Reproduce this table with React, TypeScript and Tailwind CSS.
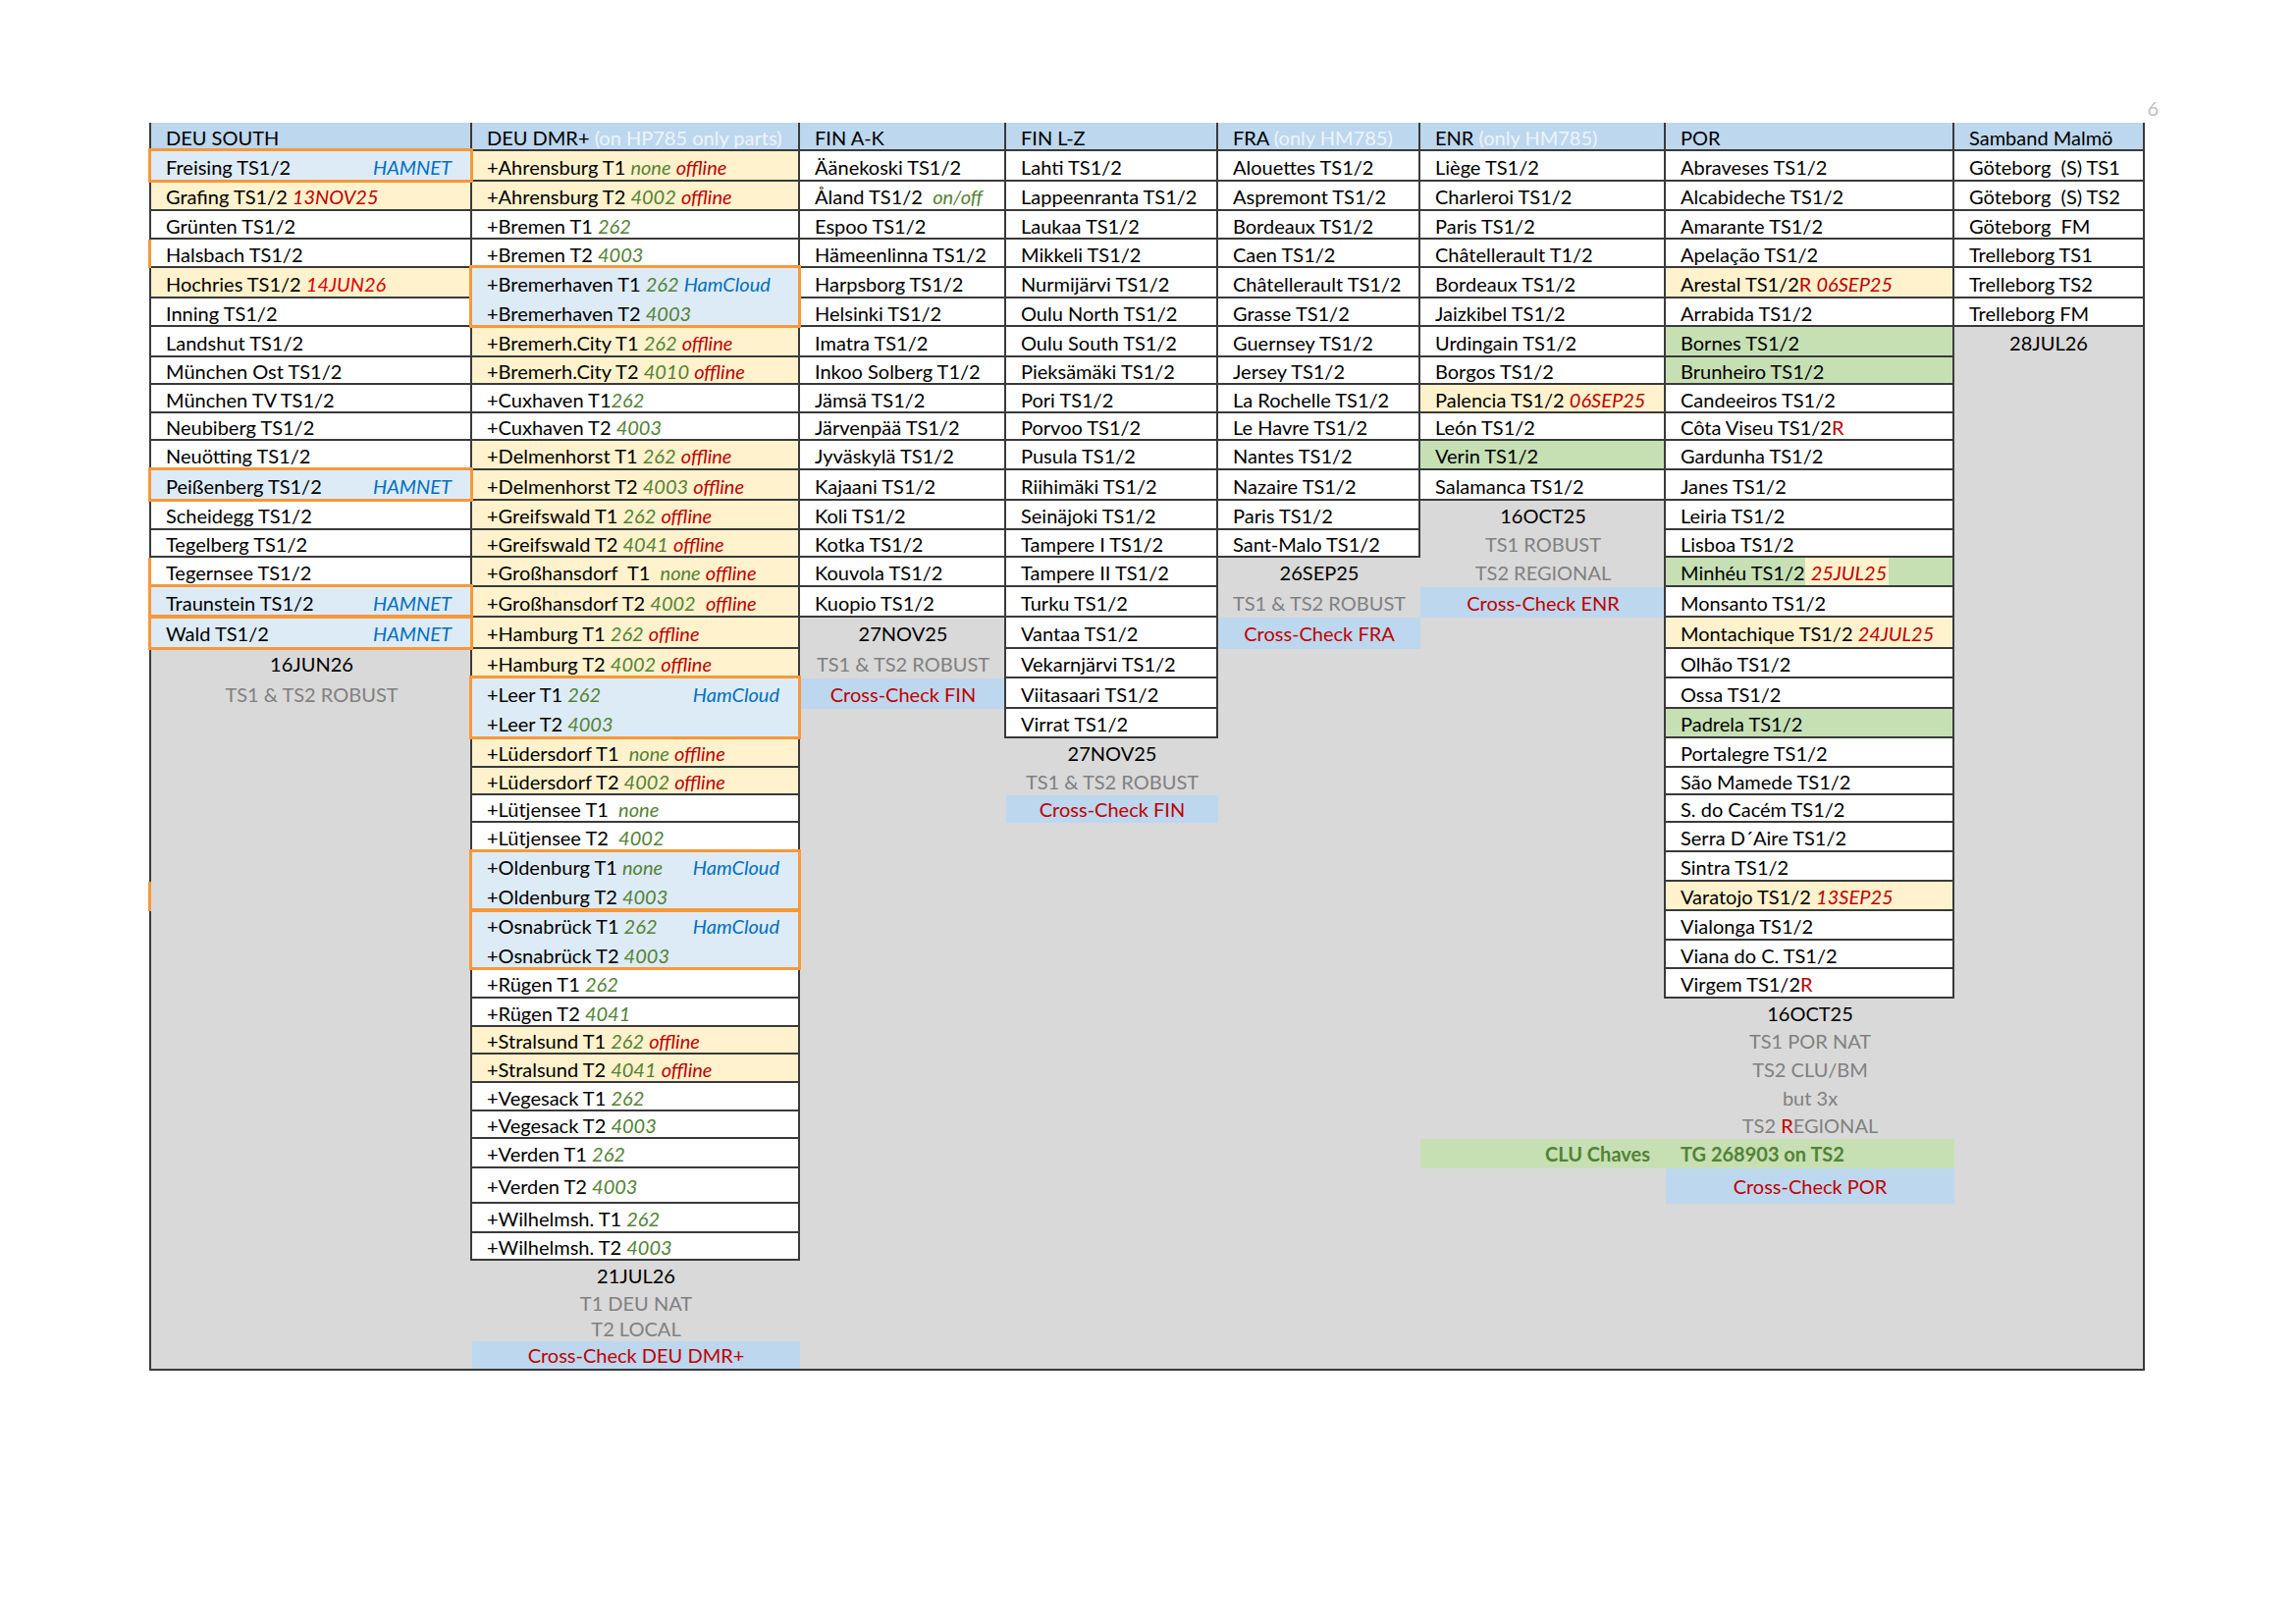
import React from "react";

type N = React.ReactNode;
type Line = { l?: N; r?: N; c?: N; cr?: N };
type Cell = { box: boolean; bg: string; lines: Line[]; orange?: boolean; oleft?: boolean };

const RH = [
  "h-[29px]", "h-[31px]", "h-[30px]", "h-[29px]", "h-[29px]", "h-[31px]", "h-[29px]", "h-[31px]", "h-[28px]", "h-[29px]",
  "h-[28px]", "h-[30px]", "h-[31px]", "h-[30px]", "h-[28px]", "h-[30px]", "h-[31px]", "h-[32px]", "h-[30px]", "h-[31px]",
  "h-[30px]", "h-[30px]", "h-[28px]", "h-[28px]", "h-[30px]", "h-[30px]", "h-[30px]", "h-[30px]", "h-[29px]", "h-[30px]",
  "h-[29px]", "h-[28px]", "h-[29px]", "h-[29px]", "h-[28px]", "h-[30px]", "h-[36px]", "h-[30px]", "h-[28px]", "h-[29px]",
  "h-[27px]", "h-[26px]", "h-[28px]",
];

const CW = ["w-[327px]", "w-[334px]", "w-[210px]", "w-[216px]", "w-[206px]", "w-[250px]", "w-[294px]", "w-[192px]"];

const W = "bg-white";
const Y = "bg-[#fff2cc]";
const LB = "bg-[#ddebf7]";
const GN = "bg-[#c6e0b4]";
const BL = "bg-[#bdd7ee]";
const GY = "bg-[#d9d9d9]";

const G = ({ children }: { children: N }) => <span className="italic text-[#548235]">{children}</span>;
const R = ({ children }: { children: N }) => <span className="italic text-[#c00000]">{children}</span>;
const RU = ({ children }: { children: N }) => <span className="text-[#c00000]">{children}</span>;
const B = ({ children }: { children: N }) => <span className="italic text-[#0070c0]">{children}</span>;
const GT = ({ children }: { children: N }) => <span className="text-[#808080]">{children}</span>;
const LT = ({ children }: { children: N }) => <span className="text-[#eef4fb]">{children}</span>;
const CG = ({ children }: { children: N }) => <span className="font-bold text-[#548235]">{children}</span>;

const box = (l: N, bg: string = W, o: { r?: N; orange?: boolean; oleft?: boolean } = {}): Cell => ({
  box: true,
  bg,
  lines: [{ l, r: o.r }],
  orange: o.orange,
  oleft: o.oleft,
});
const box2 = (a: Line, b: Line, bg: string): Cell => ({ box: true, bg, lines: [a, b], orange: true });
const fill = (line: Line = {}, bg: string = GY, oleft?: boolean): Cell => ({ box: false, bg, lines: [line], oleft });
const pad = (n: number): Cell[] => Array.from({ length: Math.max(0, n) }, () => fill());
const cc = (t: string): Cell => fill({ c: <RU>{t}</RU> }, BL);

const COLS: { head: N; cells: Cell[] }[] = [
  {
    head: "DEU SOUTH",
    cells: [
      box("Freising TS1/2", LB, { r: <B>HAMNET</B>, orange: true }),
      box(<>Grafing TS1/2 <R>13NOV25</R></>, Y),
      box("Grünten TS1/2"),
      box("Halsbach TS1/2", W, { oleft: true }),
      box(<>Hochries TS1/2 <span className="italic text-[#e00000]">14JUN26</span></>, Y),
      box("Inning TS1/2"),
      box("Landshut TS1/2"),
      box("München Ost TS1/2"),
      box("München TV TS1/2"),
      box("Neubiberg TS1/2"),
      box("Neuötting TS1/2"),
      box("Peißenberg TS1/2", LB, { r: <B>HAMNET</B>, orange: true }),
      box("Scheidegg TS1/2"),
      box("Tegelberg TS1/2"),
      box("Tegernsee TS1/2", W, { oleft: true }),
      box("Traunstein TS1/2", LB, { r: <B>HAMNET</B>, orange: true }),
      box("Wald TS1/2", LB, { r: <B>HAMNET</B>, orange: true }),
      fill({ c: "16JUN26" }),
      fill({ c: <GT>TS1 &amp; TS2 ROBUST</GT> }),
      ...pad(6),
      fill({}, GY, true),
    ],
  },
  {
    head: (
      <>
        DEU DMR+ <LT>(on HP785 only parts)</LT>
      </>
    ),
    cells: [
      box(<>+Ahrensburg T1 <G>none</G> <R>offline</R></>, Y),
      box(<>+Ahrensburg T2 <G>4002</G> <R>offline</R></>, Y),
      box(<>+Bremen T1 <G>262</G></>),
      box(<>+Bremen T2 <G>4003</G></>),
      box2(
        { l: <>+Bremerhaven T1 <G>262</G> <B>HamCloud</B></> },
        { l: <>+Bremerhaven T2 <G>4003</G></> },
        LB
      ),
      box(<>+Bremerh.City T1 <G>262</G> <R>offline</R></>, Y),
      box(<>+Bremerh.City T2 <G>4010</G> <R>offline</R></>, Y),
      box(<>+Cuxhaven T1<G>262</G></>),
      box(<>+Cuxhaven T2 <G>4003</G></>),
      box(<>+Delmenhorst T1 <G>262</G> <R>offline</R></>, Y),
      box(<>+Delmenhorst T2 <G>4003</G> <R>offline</R></>, Y),
      box(<>+Greifswald T1 <G>262</G> <R>offline</R></>, Y),
      box(<>+Greifswald T2 <G>4041</G> <R>offline</R></>, Y),
      box(<>{"+Großhansdorf  T1  "}<G>none</G> <R>offline</R></>, Y),
      box(<>+Großhansdorf T2 <G>4002</G>{"  "}<R>offline</R></>, Y),
      box(<>+Hamburg T1 <G>262</G> <R>offline</R></>, Y),
      box(<>+Hamburg T2 <G>4002</G> <R>offline</R></>, Y),
      box2({ l: <>+Leer T1 <G>262</G></>, r: <B>HamCloud</B> }, { l: <>+Leer T2 <G>4003</G></> }, LB),
      box(<>{"+Lüdersdorf T1  "}<G>none</G> <R>offline</R></>, Y),
      box(<>+Lüdersdorf T2 <G>4002</G> <R>offline</R></>, Y),
      box(<>{"+Lütjensee T1  "}<G>none</G></>),
      box(<>{"+Lütjensee T2  "}<G>4002</G></>),
      box2({ l: <>+Oldenburg T1 <G>none</G></>, r: <B>HamCloud</B> }, { l: <>+Oldenburg T2 <G>4003</G></> }, LB),
      box2({ l: <>+Osnabrück T1 <G>262</G></>, r: <B>HamCloud</B> }, { l: <>+Osnabrück T2 <G>4003</G></> }, LB),
      box(<>+Rügen T1 <G>262</G></>),
      box(<>+Rügen T2 <G>4041</G></>),
      box(<>+Stralsund T1 <G>262</G> <R>offline</R></>, Y),
      box(<>+Stralsund T2 <G>4041</G> <R>offline</R></>, Y),
      box(<>+Vegesack T1 <G>262</G></>),
      box(<>+Vegesack T2 <G>4003</G></>),
      box(<>+Verden T1 <G>262</G></>),
      box(<>+Verden T2 <G>4003</G></>),
      box(<>+Wilhelmsh. T1 <G>262</G></>),
      box(<>+Wilhelmsh. T2 <G>4003</G></>),
      fill({ c: "21JUL26" }),
      fill({ c: <GT>T1 DEU NAT</GT> }),
      fill({ c: <GT>T2 LOCAL</GT> }),
      cc("Cross-Check DEU DMR+"),
    ],
  },
  {
    head: "FIN A-K",
    cells: [
      box("Äänekoski TS1/2"),
      box(<>{"Åland TS1/2  "}<G>on/off</G></>),
      box("Espoo TS1/2"),
      box("Hämeenlinna TS1/2"),
      box("Harpsborg TS1/2"),
      box("Helsinki TS1/2"),
      box("Imatra TS1/2"),
      box("Inkoo Solberg T1/2"),
      box("Jämsä TS1/2"),
      box("Järvenpää TS1/2"),
      box("Jyväskylä TS1/2"),
      box("Kajaani TS1/2"),
      box("Koli TS1/2"),
      box("Kotka TS1/2"),
      box("Kouvola TS1/2"),
      box("Kuopio TS1/2"),
      fill({ c: "27NOV25" }),
      fill({ c: <GT>TS1 &amp; TS2 ROBUST</GT> }),
      cc("Cross-Check FIN"),
    ],
  },
  {
    head: "FIN L-Z",
    cells: [
      box("Lahti TS1/2"),
      box("Lappeenranta TS1/2"),
      box("Laukaa TS1/2"),
      box("Mikkeli TS1/2"),
      box("Nurmijärvi TS1/2"),
      box("Oulu North TS1/2"),
      box("Oulu South TS1/2"),
      box("Pieksämäki TS1/2"),
      box("Pori TS1/2"),
      box("Porvoo TS1/2"),
      box("Pusula TS1/2"),
      box("Riihimäki TS1/2"),
      box("Seinäjoki TS1/2"),
      box("Tampere I TS1/2"),
      box("Tampere II TS1/2"),
      box("Turku TS1/2"),
      box("Vantaa TS1/2"),
      box("Vekarnjärvi TS1/2"),
      box("Viitasaari TS1/2"),
      box("Virrat TS1/2"),
      fill({ c: "27NOV25" }),
      fill({ c: <GT>TS1 &amp; TS2 ROBUST</GT> }),
      cc("Cross-Check FIN"),
    ],
  },
  {
    head: (
      <>
        FRA <LT>(only HM785)</LT>
      </>
    ),
    cells: [
      box("Alouettes TS1/2"),
      box("Aspremont TS1/2"),
      box("Bordeaux TS1/2"),
      box("Caen TS1/2"),
      box("Châtellerault TS1/2"),
      box("Grasse TS1/2"),
      box("Guernsey TS1/2"),
      box("Jersey TS1/2"),
      box("La Rochelle TS1/2"),
      box("Le Havre TS1/2"),
      box("Nantes TS1/2"),
      box("Nazaire TS1/2"),
      box("Paris TS1/2"),
      box("Sant-Malo TS1/2"),
      fill({ c: "26SEP25" }),
      fill({ c: <GT>TS1 &amp; TS2 ROBUST</GT> }),
      cc("Cross-Check FRA"),
    ],
  },
  {
    head: (
      <>
        ENR <LT>(only HM785)</LT>
      </>
    ),
    cells: [
      box("Liège TS1/2"),
      box("Charleroi TS1/2"),
      box("Paris TS1/2"),
      box("Châtellerault T1/2"),
      box("Bordeaux TS1/2"),
      box("Jaizkibel TS1/2"),
      box("Urdingain TS1/2"),
      box("Borgos TS1/2"),
      box(<>Palencia TS1/2 <R>06SEP25</R></>, Y),
      box("León TS1/2"),
      box("Verin TS1/2", GN),
      box("Salamanca TS1/2"),
      fill({ c: "16OCT25" }),
      fill({ c: <GT>TS1 ROBUST</GT> }),
      fill({ c: <GT>TS2 REGIONAL</GT> }),
      cc("Cross-Check ENR"),
      ...pad(18),
      fill({ cr: <CG>CLU Chaves</CG> }, GN),
    ],
  },
  {
    head: "POR",
    cells: [
      box("Abraveses TS1/2"),
      box("Alcabideche TS1/2"),
      box("Amarante TS1/2"),
      box("Apelação TS1/2"),
      box(<>Arestal TS1/2<RU>R</RU> <R>06SEP25</R></>, Y),
      box("Arrabida TS1/2"),
      box("Bornes TS1/2", GN),
      box("Brunheiro TS1/2", GN),
      box("Candeeiros TS1/2"),
      box(<>Côta Viseu TS1/2<RU>R</RU></>),
      box("Gardunha TS1/2"),
      box("Janes TS1/2"),
      box("Leiria TS1/2"),
      box("Lisboa TS1/2"),
      box(
        <>
          Minhéu TS1/2
          <span className="bg-[#fff2cc] pt-[3px] pb-[1px] pl-[6px] pr-[2px]">
            <R>25JUL25</R>
          </span>
        </>,
        GN
      ),
      box("Monsanto TS1/2"),
      box(<>Montachique TS1/2 <R>24JUL25</R></>, Y),
      box("Olhão TS1/2"),
      box("Ossa TS1/2"),
      box("Padrela TS1/2", GN),
      box("Portalegre TS1/2"),
      box("São Mamede TS1/2"),
      box("S. do Cacém TS1/2"),
      box("Serra D´Aire TS1/2"),
      box("Sintra TS1/2"),
      box(<>Varatojo TS1/2 <R>13SEP25</R></>, Y),
      box("Vialonga TS1/2"),
      box("Viana do C. TS1/2"),
      box(<>Virgem TS1/2<RU>R</RU></>),
      fill({ c: "16OCT25" }),
      fill({ c: <GT>TS1 POR NAT</GT> }),
      fill({ c: <GT>TS2 CLU/BM</GT> }),
      fill({ c: <GT>but 3x</GT> }),
      fill({ c: <><GT>TS2 </GT><RU>R</RU><GT>EGIONAL</GT></> }),
      fill({ l: <CG>TG 268903 on TS2</CG> }, GN),
      cc("Cross-Check POR"),
    ],
  },
  {
    head: "Samband Malmö",
    cells: [
      box("Göteborg  (S) TS1"),
      box("Göteborg  (S) TS2"),
      box("Göteborg  FM"),
      box("Trelleborg TS1"),
      box("Trelleborg TS2"),
      box("Trelleborg FM"),
      fill({ c: "28JUL26" }),
    ],
  },
];

function LineView({ line, h }: { line: Line; h: string }) {
  if (line.c !== undefined) {
    return (
      <div className={`${h} flex items-center justify-center whitespace-pre`}>
        <span>{line.c}</span>
      </div>
    );
  }
  if (line.cr !== undefined) {
    return (
      <div className={`${h} flex items-center justify-end whitespace-pre pr-[16px]`}>
        <span>{line.cr}</span>
      </div>
    );
  }
  return (
    <div className={`${h} flex items-center justify-between whitespace-pre pl-[15px] pr-[21px]`}>
      <span>{line.l}</span>
      {line.r !== undefined && <span>{line.r}</span>}
    </div>
  );
}

export default function App() {
  const full = COLS.map((col) => {
    const n = col.cells.reduce((a, x) => a + x.lines.length, 0);
    return [...col.cells, ...pad(42 - n)];
  });
  const isBox = full.map((cells) => {
    const arr: boolean[] = [true];
    cells.forEach((cell) => cell.lines.forEach(() => arr.push(cell.box)));
    return arr;
  });

  return (
    <div className="min-h-screen w-full bg-white text-[20px] leading-[24px] text-black [font-family:Lato,'Noto_Sans',sans-serif]">
      <div className="pt-[100px] pl-[152px]">
        <div className="flex h-[25px] w-[2047px] justify-end leading-[20px] text-[#bfbfbf]">6</div>
        <div className="flex w-[2033px] border-x-2 border-b-2 border-[#3a3a3a] bg-[#d9d9d9]">
          {COLS.map((col, ci) => {
            const last = ci === 7;
            let row = 1;
            return (
              <div key={ci} className={`flex flex-col ${CW[ci]}`}>
                <div
                  className={`${RH[0]} flex items-center whitespace-pre bg-[#bdd7ee] pl-[15px] ${
                    last ? "shadow-[inset_0_-2px_0_0_#3a3a3a]" : "shadow-[inset_-2px_-2px_0_0_#3a3a3a]"
                  }`}
                >
                  <span>{col.head}</span>
                </div>
                {full[ci].map((cell, k) => {
                  const start = row;
                  row += cell.lines.length;
                  const rows = cell.lines.map((_, i) => start + i);
                  const needLeft = cell.box && ci > 0 && rows.some((rr) => !isBox[ci - 1][rr]);
                  let sh = "";
                  if (cell.box) {
                    if (last) {
                      sh = needLeft
                        ? "shadow-[inset_0_-2px_0_0_#3a3a3a,-2px_0_0_0_#3a3a3a]"
                        : "shadow-[inset_0_-2px_0_0_#3a3a3a]";
                    } else {
                      sh = needLeft
                        ? "shadow-[inset_-2px_-2px_0_0_#3a3a3a,-2px_0_0_0_#3a3a3a]"
                        : "shadow-[inset_-2px_-2px_0_0_#3a3a3a]";
                    }
                  }
                  return (
                    <div key={k} className={`relative flex flex-col ${cell.bg} ${sh}`}>
                      {cell.lines.map((ln, i) => (
                        <LineView key={i} line={ln} h={RH[start + i]} />
                      ))}
                      {cell.orange && (
                        <div className="pointer-events-none absolute -top-[3px] -right-[1px] -bottom-[1px] -left-[3px] z-10 border-[3px] border-[#f7983a]" />
                      )}
                      {cell.oleft && (
                        <div className="pointer-events-none absolute top-0 bottom-0 -left-[3px] z-10 w-[3px] bg-[#f7983a]" />
                      )}
                    </div>
                  );
                })}
                <div className="flex-1" />
              </div>
            );
          })}
        </div>
      </div>
    </div>
  );
}
